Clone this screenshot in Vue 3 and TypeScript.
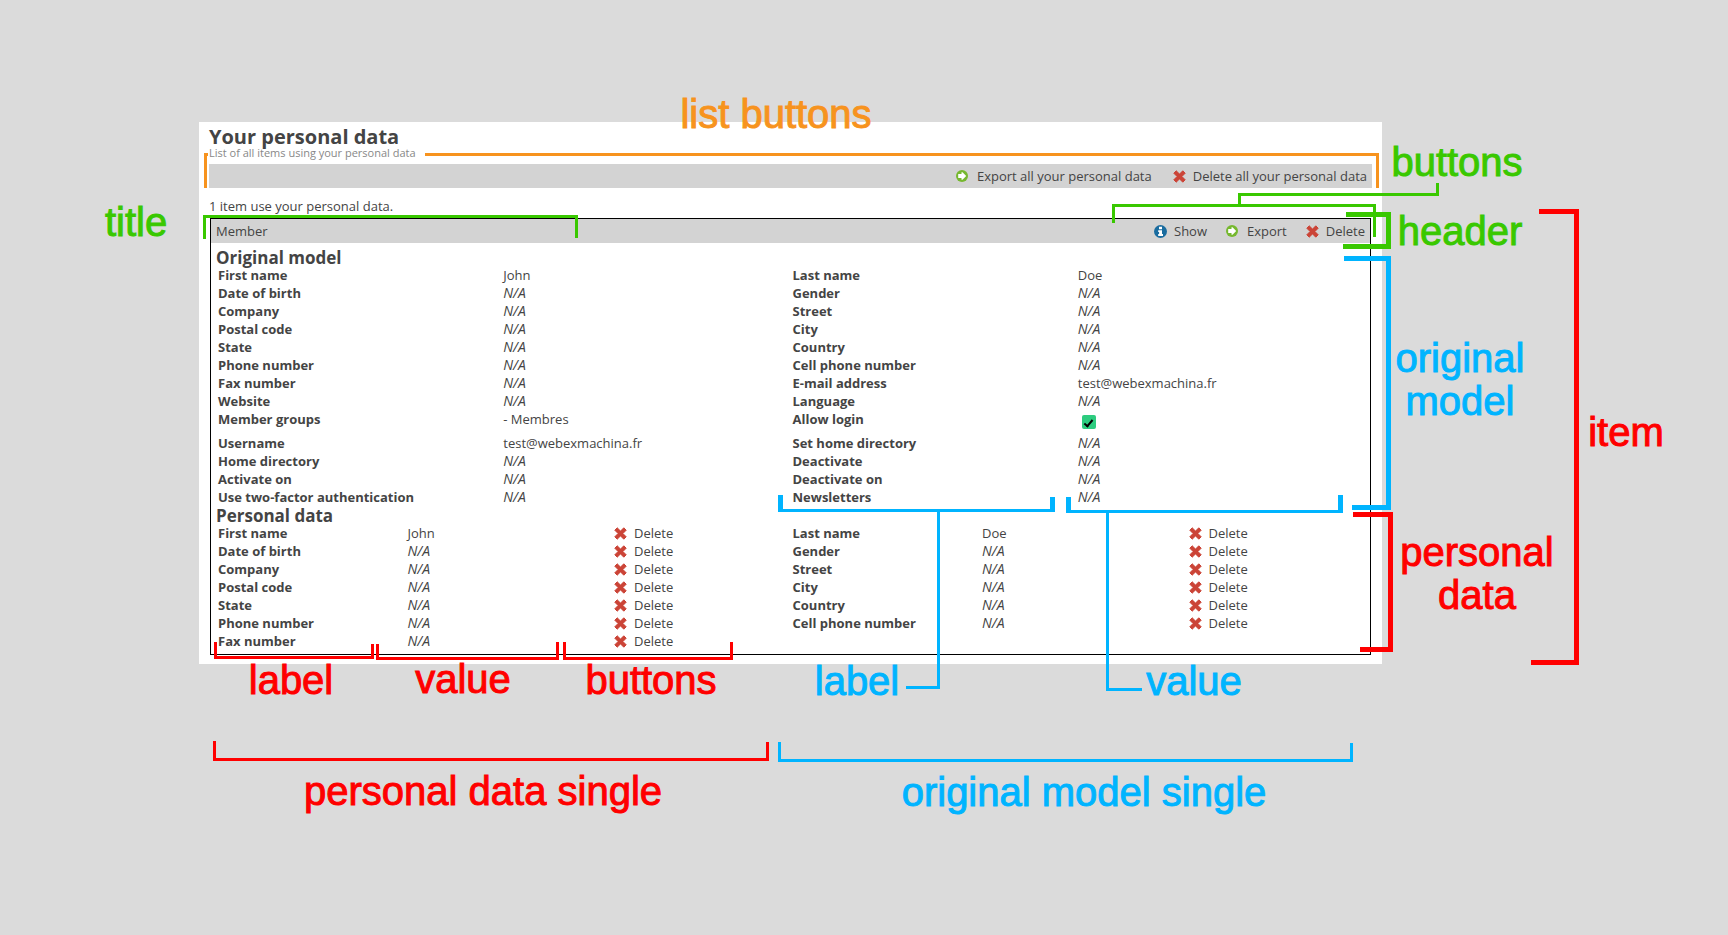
<script setup lang="ts">
interface Field {
  label: string
  value?: string
  kind?: 'check'
}

interface Callout {
  text: string
  tone: string
  x: number
  y: number
}

const CANVAS = 1728

const original: Field[] = [
  { label: 'First name', value: 'John' },
  { label: 'Last name', value: 'Doe' },
  { label: 'Date of birth' },
  { label: 'Gender' },
  { label: 'Company' },
  { label: 'Street' },
  { label: 'Postal code' },
  { label: 'City' },
  { label: 'State' },
  { label: 'Country' },
  { label: 'Phone number' },
  { label: 'Cell phone number' },
  { label: 'Fax number' },
  { label: 'E-mail address', value: 'test@webexmachina.fr' },
  { label: 'Website' },
  { label: 'Language' },
  { label: 'Member groups', value: '- Membres' },
  { label: 'Allow login', kind: 'check' },
  { label: 'Username', value: 'test@webexmachina.fr' },
  { label: 'Set home directory' },
  { label: 'Home directory' },
  { label: 'Deactivate' },
  { label: 'Activate on' },
  { label: 'Deactivate on' },
  { label: 'Use two-factor authentication' },
  { label: 'Newsletters' },
]

const personal: Field[] = original.slice(0, 13)

const callouts: Callout[] = [
  { text: 'list buttons', tone: 'orange', x: 776, y: 130 },
  { text: 'title', tone: 'green', x: 136, y: 238 },
  { text: 'buttons', tone: 'green', x: 1457, y: 178 },
  { text: 'header', tone: 'green', x: 1460, y: 247 },
  { text: 'original\nmodel', tone: 'blue', x: 1460, y: 374 },
  { text: 'item', tone: 'red', x: 1626, y: 448 },
  { text: 'personal', tone: 'red', x: 1477, y: 568 },
  { text: 'data', tone: 'red', x: 1477, y: 611 },
  { text: 'label', tone: 'red', x: 291, y: 696 },
  { text: 'value', tone: 'red', x: 463, y: 695 },
  { text: 'buttons', tone: 'red', x: 651, y: 696 },
  { text: 'label', tone: 'blue', x: 857, y: 697 },
  { text: 'value', tone: 'blue', x: 1194, y: 697 },
  { text: 'personal data single', tone: 'red', x: 483, y: 807 },
  { text: 'original model single', tone: 'blue', x: 1084, y: 808 },
]

const place = (c: Callout) => ({ left: `${(c.x / CANVAS) * 100}%`, top: `${c.y - 37}px` })
</script>

<template>
  <div class="page">
    <svg class="sprite" aria-hidden="true">
      <symbol id="i-export" viewBox="0 0 12 12">
        <circle cx="6" cy="6" r="6" fill="#76b82f" />
        <path d="M2.2 4.1h3.3V2.2h1L10.200 6 6.500 9.800h-1V7.900H2.200z" fill="#fff" />
      </symbol>
      <symbol id="i-delete" viewBox="0 0 13 13">
        <path d="M3.200.800 6.500 4.100 9.800.800 12.200 3.200 8.900 6.500 12.200 9.800 9.800 12.200 6.500 8.900 3.200 12.200.800 9.800 4.100 6.500.800 3.200z" fill="#cb4437" stroke="#cb4437" stroke-linejoin="round" />
      </symbol>
      <symbol id="i-show" viewBox="0 0 13 13">
        <circle cx="6.5" cy="6.5" r="6.5" fill="#1a6c9f" />
        <path d="M5 1.800h3v2.400H5zM4.200 5.200H8V9h1v1.900H4.200V9h.9V7.100h-.9z" fill="#fff" />
      </symbol>
    </svg>

    <main class="panel">
      <h1>Your personal data</h1>
      <p class="subtitle">List of all items using your personal data</p>
      <div class="bar list-bar">
        <button type="button" class="export"><svg><use href="#i-export" /></svg>Export all your personal data</button>
        <button type="button"><svg><use href="#i-delete" /></svg>Delete all your personal data</button>
      </div>
      <p class="count">1 item use your personal data.</p>

      <article class="item">
        <header class="bar">
          <span class="name">Member</span>
          <button type="button"><svg><use href="#i-show" /></svg>Show</button>
          <button type="button" class="export"><svg><use href="#i-export" /></svg>Export</button>
          <button type="button"><svg><use href="#i-delete" /></svg>Delete</button>
        </header>
        <div class="body">
          <h2>Original model</h2>
          <div class="fields">
            <div v-for="f in original" :key="f.label" class="single">
              <label v-if="f.kind" class="label" for="allow-login">{{ f.label }}</label>
              <span v-else class="label">{{ f.label }}</span>
              <span v-if="f.kind" class="value check"><input id="allow-login" type="checkbox" checked /></span>
              <span v-else-if="f.value" class="value">{{ f.value }}</span>
              <em v-else class="value">N/A</em>
            </div>
          </div>
          <h2>Personal data</h2>
          <div class="fields">
            <div v-for="f in personal" :key="f.label" class="single three">
              <span class="label">{{ f.label }}</span>
              <span v-if="f.value" class="value">{{ f.value }}</span>
              <em v-else class="value">N/A</em>
              <button type="button"><svg><use href="#i-delete" /></svg>Delete</button>
            </div>
          </div>
        </div>
      </article>
    </main>

    <div class="notes">
      <svg class="lines" viewBox="0 0 1728 935" preserveAspectRatio="none" aria-hidden="true">
        <g class="orange">
          <path d="M208 154.500H205.500V188M425 154.500H1377.500V188" />
        </g>
        <g class="green">
          <path d="M204.500 239V216.500H576.500V238" />
          <path d="M1113.500 223V205.500H1374.500V237M1239.500 204V194.500H1437.500V183" />
          <path class="thick" d="M1346 214.500H1388.500V246.500H1343" />
        </g>
        <g class="blue">
          <path class="thick" d="M1344 258.500H1388.500V507.500H1352" />
          <path d="M778 510.500H1055M1066 511.500H1343M938.500 512V687.500H906M1107.500 513V689.500H1142" />
          <path class="thick" d="M780.500 495V512M1052.500 497V512M1068.500 497V513M1340.500 495V513" />
          <path d="M779.500 742V760.500H1351.500V743" />
        </g>
        <g class="red">
          <path class="thick" d="M1353 514.500H1390.500V649.500H1360M1539 211.500H1576.500V662.500H1531" />
          <path d="M215.500 642V657.500H372.500V644M377.500 644V658.500H557.500V642M564.500 642V658.500H731.500V642" />
          <path d="M214.500 741V759.500H767.500V742" />
        </g>
      </svg>
      <span v-for="(c, i) in callouts" :key="i" class="callout" :class="c.tone" :style="place(c)">{{ c.text }}</span>
    </div>
  </div>
</template>

<style>
body {
  margin: 0;
  background: #dbdbdb;
}
</style>

<style scoped>
.page {
  position: relative;
  display: grid;
  grid-template-columns: 199fr 1183fr 346fr;
  align-items: start;
  min-height: 100vh;
  padding-top: 122px;
  box-sizing: border-box;
  background: #dbdbdb;
  color: #444;
  font: 13px/18px "Open Sans", "Noto Sans", sans-serif;
}
.sprite {
  position: absolute;
  width: 0;
  height: 0;
}
.panel {
  grid-column: 2;
  padding: 5px 10px 9px;
  background: #fff;
}
h1,
h2,
p {
  margin: 0;
}
h1 {
  font-size: 20px;
  line-height: 19px;
  font-weight: 700;
}
.subtitle {
  color: #888;
  font-size: 11px;
  line-height: 14px;
}
.bar {
  display: flex;
  align-items: center;
  height: 24px;
  padding: 0 5px;
  background: #d3d3d3;
}
.list-bar {
  justify-content: flex-end;
  gap: 21px;
  margin-top: 4px;
}
button {
  display: flex;
  align-items: center;
  gap: 7px;
  padding: 0;
  border: 0;
  background: none;
  color: inherit;
  font: inherit;
  cursor: pointer;
}
button svg {
  width: 13px;
  height: 13px;
}
.export {
  gap: 9px;
}
.export svg {
  width: 12px;
  height: 12px;
}
.count {
  margin-top: 9px;
  margin-bottom: 3px;
}
.item {
  margin: 0 1px;
  border: 1px solid #000;
}
.item .bar {
  gap: 19px;
}
.name {
  flex: 1;
}
.body {
  padding: 5px 5px 4px;
}
h2 {
  height: 18px;
  font-size: 17px;
  line-height: 20px;
  font-weight: 700;
}
.fields {
  display: grid;
  grid-template-columns: 1fr 1fr;
}
.single {
  display: grid;
  grid-template-columns: 1fr 1fr;
}
.three {
  grid-template-columns: 1fr 1fr 1fr;
}
.three button {
  padding-left: 15px;
}
.label {
  padding-left: 2px;
  font-weight: 700;
}
em {
  font-size: 14px;
}
.check {
  display: flex;
  align-items: center;
  height: 24px;
}
.check input {
  appearance: none;
  display: grid;
  place-items: center;
  width: 14px;
  height: 14px;
  margin: 0 4px;
  border-radius: 2px;
  background: #2dcc7f;
}
.check input::before {
  content: "";
  width: 3px;
  height: 7px;
  border: solid #000;
  border-width: 0 2px 2px 0;
  transform: rotate(40deg);
}
.notes {
  position: absolute;
  inset: 0;
  overflow: hidden;
  pointer-events: none;
}
.lines {
  display: block;
  width: 100%;
  height: 935px;
  fill: none;
  stroke: currentColor;
  stroke-width: 3px;
}
.thick {
  stroke-width: 5px;
}
.orange {
  color: #f7931e;
}
.green {
  color: #39c800;
}
.blue {
  color: #00b4ff;
}
.red {
  color: #f00;
}
.callout {
  position: absolute;
  transform: translateX(-50%);
  font: 40px/43px "Liberation Sans", Arial, sans-serif;
  -webkit-text-stroke: 1px currentColor;
  text-align: center;
  white-space: pre;
}
</style>
